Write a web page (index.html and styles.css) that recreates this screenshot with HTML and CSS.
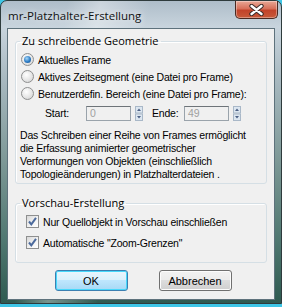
FILE: index.html
```html
<!DOCTYPE html>
<html lang="de">
<head>
<meta charset="UTF-8">
<title>mr-Platzhalter-Erstellung</title>
<link rel="stylesheet" href="styles.css">
</head>
<body>
<div class="window">
<div class="titlebar">
<span class="title">mr-Platzhalter-Erstellung</span>
<button class="close-btn" aria-label="Schließen">
<svg width="17" height="12" viewBox="0 0 17 12"><path d="M3.5 2 L8.5 6 L13.5 2 M3.5 10 L8.5 6 L13.5 10" fill="none" stroke="#3a2a28" stroke-width="4.4" stroke-linecap="round"/><path d="M3.5 2 L8.5 6 L13.5 2 M3.5 10 L8.5 6 L13.5 10" fill="none" stroke="#fff" stroke-width="2.4" stroke-linecap="round"/></svg>
</button>
</div>
<div class="client">
<fieldset class="group group-geo">
<legend>Zu schreibende Geometrie</legend>
<label class="opt"><span class="radio checked"></span>Aktuelles Frame</label>
<label class="opt"><span class="radio"></span>Aktives Zeitsegment (eine Datei pro Frame)</label>
<label class="opt"><span class="radio"></span>Benutzerdefin. Bereich (eine Datei pro Frame):</label>
<div class="range-row">
<span class="range-label">Start:</span>
<span class="field">0</span>
<span class="spinner"><svg width="8" height="15" viewBox="0 0 8 15"><rect x="0.5" y="0.5" width="7" height="6.5" fill="#dce6f0" stroke="#a9b8c8"/><rect x="0.5" y="8" width="7" height="6.5" fill="#dce6f0" stroke="#a9b8c8"/><path d="M2 5 L4 2.5 L6 5Z M2 10 L4 12.5 L6 10Z" fill="#4d6185"/></svg></span>
<span class="range-label end">Ende:</span>
<span class="field">49</span>
<span class="spinner"><svg width="8" height="15" viewBox="0 0 8 15"><rect x="0.5" y="0.5" width="7" height="6.5" fill="#dce6f0" stroke="#a9b8c8"/><rect x="0.5" y="8" width="7" height="6.5" fill="#dce6f0" stroke="#a9b8c8"/><path d="M2 5 L4 2.5 L6 5Z M2 10 L4 12.5 L6 10Z" fill="#4d6185"/></svg></span>
</div>
<p class="note">Das Schreiben einer Reihe von Frames ermöglicht<br>die Erfassung animierter geometrischer<br>Verformungen von Objekten (einschließlich<br>Topologieänderungen) in Platzhalterdateien .</p>
</fieldset>
<fieldset class="group group-preview">
<legend>Vorschau-Erstellung</legend>
<label class="chk"><span class="checkbox"><svg width="11" height="11" viewBox="0 0 11 11"><path d="M2 5.5 L4.3 8.3 L9 1.8" fill="none" stroke="#4c6a9c" stroke-width="2"/></svg></span>Nur Quellobjekt in Vorschau einschließen</label>
<label class="chk"><span class="checkbox"><svg width="11" height="11" viewBox="0 0 11 11"><path d="M2 5.5 L4.3 8.3 L9 1.8" fill="none" stroke="#4c6a9c" stroke-width="2"/></svg></span>Automatische "Zoom-Grenzen"</label>
</fieldset>
<div class="buttons">
<button class="btn btn-default">OK</button>
<button class="btn">Abbrechen</button>
</div>
</div>
</div>
</body>
</html>
```
FILE: styles.css
```css
body {
margin: 0;
background-color: #3ec6e6;
font-family: "Liberation Sans", Arial, sans-serif;
font-size: 10.5px;
letter-spacing: -0.2px;
color: #000;
}
.window {
width: 282px;
height: 304px;
box-sizing: border-box;
border: 1px solid #2e3b3c;
border-radius: 7px 7px 0 0;
padding: 0 6px 3px 6px;
display: flex;
flex-direction: column;
background: linear-gradient(100deg, rgba(255,255,255,0) 20%, rgba(255,255,255,0.35) 30%, rgba(255,255,255,0) 45%),
linear-gradient(to bottom, #aebdc9 0, #c8d4dd 26px, #a7b8bf 80px, #7d9896 160px, #4f7770 240px, #2e5a50 100%);
}
.titlebar {
height: 27px;
display: flex;
align-items: flex-start;
justify-content: space-between;
}
.title {
font-family: "Open Sans", "Liberation Sans", sans-serif;
font-size: 11.5px;
letter-spacing: 0;
color: #111;
margin: 7px 0 0 1px;
text-shadow: 0 0 6px rgba(255,255,255,0.9);
}
.close-btn {
width: 43px;
height: 18px;
margin-right: -3px;
padding: 0;
border: 1px solid #4a2a22;
border-top: none;
border-radius: 0 0 5px 5px;
background: linear-gradient(to bottom, #e9a896 0, #d7705a 45%, #c2432a 55%, #c85a3a 100%);
display: flex;
align-items: center;
justify-content: center;
box-shadow: inset 0 0 0 1px rgba(255,255,255,0.35);
}
.client {
flex: 1;
background-color: #f0f0f0;
border: 1px solid #5e727c;
padding: 5px 7px 0 7px;
}
.group {
margin: 0;
border: 1px solid #d5dfe5;
border-radius: 3px;
padding: 0 4px 2px 4px;
box-shadow: inset 1px 1px 0 #fff;
}
.group legend {
font-family: "Open Sans", "Liberation Sans", sans-serif;
font-size: 11px;
letter-spacing: 0;
line-height: 14px;
padding: 0 2px;
}
.opt {
display: flex;
align-items: center;
height: 17px;
}
.group-geo .opt:first-of-type {
margin-top: 3px;
}
.radio {
width: 11px;
height: 11px;
border: 1px solid #8e8f8f;
border-radius: 50%;
margin: 0 4px 0 1px;
background: radial-gradient(circle at 40% 35%, #ffffff 0, #e8e8e8 50%, #cdcdcd 100%);
position: relative;
}
.radio.checked::after {
content: "";
position: absolute;
left: 2px;
top: 2px;
width: 7px;
height: 7px;
border-radius: 50%;
background: radial-gradient(circle at 40% 35%, #a8d8f8 0, #2b7bc4 55%, #174f8a 100%);
}
.range-row {
display: flex;
align-items: center;
height: 20px;
margin-top: 1px;
}
.range-label {
width: 41px;
margin-left: 25px;
}
.range-label.end {
width: 32px;
margin-left: 9px;
}
.field {
width: 40px;
height: 13px;
border: 1px solid #9aa3ab;
border-top-color: #6e7479;
background-color: #f0f0f0;
color: #a0a0a0;
padding-left: 3px;
line-height: 13px;
margin-right: 4px;
}
.spinner {
display: flex;
}
.note {
margin: 6px 0 0 0;
line-height: 13px;
white-space: nowrap;
}
.group-preview {
margin-top: 12px;
padding-bottom: 9px;
}
.chk {
display: flex;
align-items: center;
height: 21px;
}
.group-preview .chk:first-of-type {
margin-top: 1px;
}
.checkbox {
width: 11px;
height: 11px;
border: 1px solid #8e8f8f;
margin: 0 4px 0 6px;
background: linear-gradient(135deg, #d8d8d8 0, #f4f4f4 60%, #ffffff 100%);
display: flex;
align-items: center;
justify-content: center;
}
.buttons {
display: flex;
justify-content: center;
gap: 31px;
padding-left: 4px;
margin-top: 7px;
}
.btn {
width: 73px;
height: 21px;
font-family: "Liberation Sans", Arial, sans-serif;
font-size: 11px;
color: #000;
border: 1px solid #707070;
border-radius: 3px;
background: linear-gradient(to bottom, #f2f2f2 0, #ebebeb 50%, #dddddd 50%, #cfcfcf 100%);
box-shadow: inset 0 0 0 1px #fcfcfc;
padding: 0;
}
.btn-default {
border-color: #3c7fb1;
background: linear-gradient(to bottom, #eaf6fd 0, #d9f0fc 50%, #bee6fd 50%, #a7d9f5 100%);
box-shadow: inset 0 0 0 1px #48d8fb;
}
```
